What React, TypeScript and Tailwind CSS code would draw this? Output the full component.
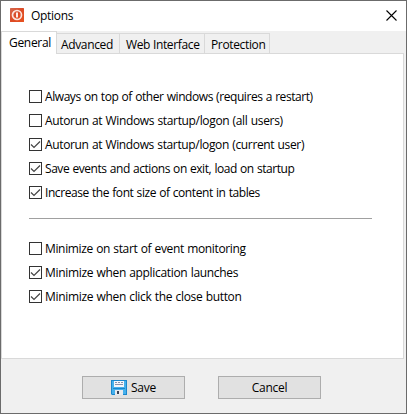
type Option = {
  label: string;
  checked: boolean;
  tracking: string;
};

const generalOptions: Option[] = [
  { label: 'Always on top of other windows (requires a restart)', checked: false, tracking: 'tracking-[-0.43px]' },
  { label: 'Autorun at Windows startup/logon (all users)', checked: false, tracking: 'tracking-[-0.34px]' },
  { label: 'Autorun at Windows startup/logon (current user)', checked: true, tracking: 'tracking-[-0.35px]' },
  { label: 'Save events and actions on exit, load on startup', checked: true, tracking: 'tracking-[-0.44px]' },
  { label: 'Increase the font size of content in tables', checked: true, tracking: 'tracking-[-0.43px]' },
];

const minimizeOptions: Option[] = [
  { label: 'Minimize on start of event monitoring', checked: false, tracking: 'tracking-[-0.35px]' },
  { label: 'Minimize when application launches', checked: true, tracking: 'tracking-[-0.32px]' },
  { label: 'Minimize when click the close button', checked: true, tracking: 'tracking-[-0.32px]' },
];

const tabs = [
  { label: 'Advanced', className: 'w-[63px] pl-1' },
  { label: 'Web Interface', className: 'w-[85px] pl-[6px]' },
  { label: 'Protection', className: 'w-[65px] pl-[6px]' },
];

const AppIcon = () => (
  <svg width="14" height="14" viewBox="0 0 14 14" className="mb-[2px] shrink-0">
    <defs>
      <linearGradient id="appIcon" x1="0" y1="0" x2="1" y2="1">
        <stop offset="0" stopColor="#d4694f" />
        <stop offset="0.5" stopColor="#dc4a25" />
        <stop offset="1" stopColor="#e8521f" />
      </linearGradient>
    </defs>
    <rect width="14" height="14" rx="0.5" fill="url(#appIcon)" />
    <circle cx="7" cy="7" r="4.5" fill="none" stroke="#fbe3dc" strokeWidth="1.7" />
    <path d="M7 4.5v5" stroke="#fff" strokeWidth="1.8" />
  </svg>
);

const SaveIcon = () => (
  <svg width="16" height="16" viewBox="0 0 16 16" className="shrink-0">
    <path d="M0 0h16v15H1l-1-1z" fill="#1a86cc" />
    <path d="M1 1h14v13H1z" fill="#45b0ec" />
    <path d="M3 1h10v6H3z" fill="#f4f6fa" />
    <path d="M4 2.5h2M7 2.5h2M10 2.5h2M4 4.5h8" stroke="#8791ab" />
    <path d="M2 8h12v1H2z" fill="#1a86cc" />
    <path d="M4 10h8v5H4z" fill="#e8eaee" />
    <path d="M6 11h2v3H6z" fill="#394255" />
  </svg>
);

const CheckRow = ({ label, checked, tracking }: Option) => (
  <label className="flex h-6 items-center">
    <span className="mb-px flex size-[13px] shrink-0 border border-[#333] bg-white">
      {checked && (
        <svg width="11" height="11" viewBox="0 0 11 11">
          <path d="M1 5.5 4 8.5 10 2.5" fill="none" stroke="#444" strokeWidth="1.2" />
        </svg>
      )}
    </span>
    <span className={`ml-[3px] whitespace-nowrap leading-6 [word-spacing:0.5px] ${tracking}`}>{label}</span>
  </label>
);

export default function App() {
  return (
    <div className="flex h-[414px] w-[407px] flex-col overflow-hidden border border-[#6b6b6b] bg-[#f0f0f0] font-['Open_Sans','Noto_Sans',sans-serif] text-[12px] text-black">
      <header className="flex h-[30px] shrink-0 items-center bg-white pl-[9px] pr-[9px]">
        <AppIcon />
        <span className="ml-[7px] tracking-[-0.3px]">Options</span>
        <button type="button" aria-label="Close" className="mb-px ml-auto">
          <svg width="11" height="11" viewBox="0 0 11 11" className="block">
            <path d="M.5.5l10 10M10.5.5l-10 10" stroke="#000" strokeWidth="1.1" />
          </svg>
        </button>
      </header>

      <nav className="z-10 flex h-[22px] shrink-0 items-end">
        <div className="-mb-px h-[23px] w-[56px] border-x border-t border-[#d9d9d9] bg-white pl-[7px] leading-[21px] tracking-[-0.3px]">
          General
        </div>
        {tabs.map(({ label, className }) => (
          <div
            key={label}
            className={`h-5 whitespace-nowrap border-r border-t border-[#d9d9d9] bg-[#f0f0f0] leading-[22px] tracking-[-0.35px] ${className}`}
          >
            {label}
          </div>
        ))}
      </nav>

      <main className="mr-[2px] h-[306px] shrink-0 border border-[#d9d9d9] bg-white pl-[27px] pt-[31px]">
        {generalOptions.map((option) => (
          <CheckRow key={option.label} {...option} />
        ))}
        <hr className="mb-[18px] mt-[13px] w-[343px] border-t border-[#a0a0a0]" />
        {minimizeOptions.map((option) => (
          <CheckRow key={option.label} {...option} />
        ))}
      </main>

      <footer className="flex gap-[33px] pl-[81px] pt-[17px] tracking-[-0.25px]">
        <button type="button" className="flex h-[23px] w-[103px] items-center justify-center gap-1 border border-[#adadad] bg-[#e1e1e1]">
          <SaveIcon />
          Save
        </button>
        <button type="button" className="h-[23px] w-[103px] border border-[#adadad] bg-[#e1e1e1]">
          Cancel
        </button>
      </footer>
    </div>
  );
}
